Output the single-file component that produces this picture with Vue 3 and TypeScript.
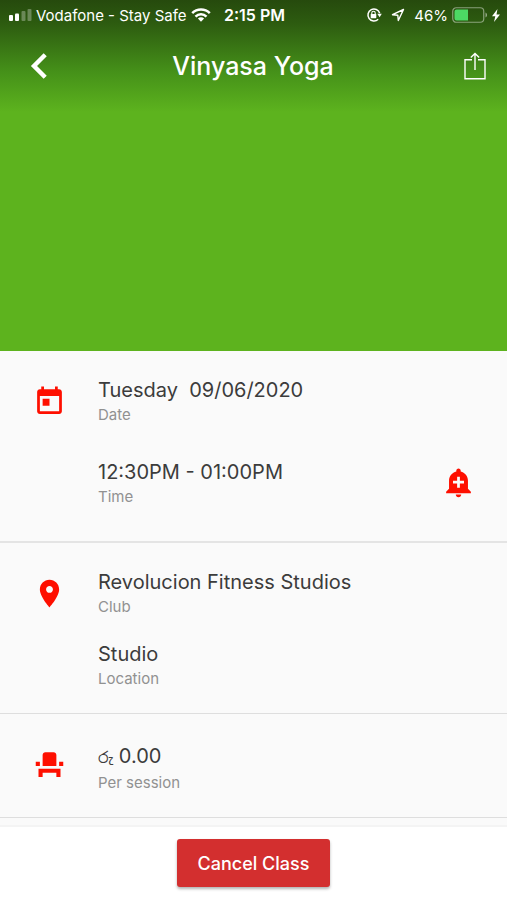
<script setup lang="ts">
import { ref } from 'vue'

interface Entry {
  currency?: string
  value: string
  label: string
  reminder?: boolean
}

interface Section {
  name: string
  icon: string
  entries: Entry[]
}

const title = ref('Vinyasa Yoga')

const sections: Section[] = [
  {
    name: 'schedule',
    icon: 'M19 3h-1V1h-2v2H8V1H6v2H5c-1.11 0-1.99.9-1.99 2L3 19c0 1.1.89 2 2 2h14c1.1 0 2-.9 2-2V5c0-1.1-.9-2-2-2zm0 16H5V8h14v11zM7 10h5v5H7z',
    entries: [
      { value: 'Tuesday  09/06/2020', label: 'Date' },
      { value: '12:30PM - 01:00PM', label: 'Time', reminder: true },
    ],
  },
  {
    name: 'place',
    icon: 'M12 2C8.13 2 5 5.13 5 9c0 5.25 7 13 7 13s7-7.75 7-13c0-3.87-3.13-7-7-7zm0 9.5c-1.38 0-2.5-1.12-2.5-2.5s1.12-2.5 2.5-2.5 2.5 1.12 2.5 2.5-1.12 2.5-2.5 2.5z',
    entries: [
      { value: 'Revolucion Fitness Studios', label: 'Club' },
      { value: 'Studio', label: 'Location' },
    ],
  },
  {
    name: 'price',
    icon: 'M4 18v3h3v-3h10v3h3v-6H4zm15-8h3v3h-3zM2 10h3v3H2zm15 3H7V5c0-1.1.9-2 2-2h6c1.1 0 2 .9 2 2v8z',
    entries: [{ currency: 'රු', value: ' 0.00', label: 'Per session' }],
  },
]
</script>

<template>
  <div class="screen">
    <header class="hero">
      <div class="status">
        <div class="status-left">
          <svg class="signal" width="23" height="12" viewBox="0 0 23 12" fill="#fff" aria-hidden="true">
            <rect x="0" y="6" width="4" height="6" rx="1" />
            <rect x="6" y="4.500" width="4" height="7.500" rx="1" />
            <rect x="12.500" y="2" width="4" height="10" rx="1" opacity=".3" />
            <rect x="18.500" y="0" width="4" height="12" rx="1" opacity=".3" />
          </svg>
          <span>Vodafone - Stay Safe</span>
          <svg width="20" height="14" viewBox="0 0 20 14" aria-hidden="true">
            <g fill="none" stroke="#fff" stroke-width="2.500">
              <path d="M1.200 5.200a12.500 12.500 0 0 1 17.600 0" />
              <path d="M4.500 8.600a7.800 7.800 0 0 1 11 0" />
            </g>
            <path d="M6.900 10.600a4.400 4.400 0 0 1 6.200 0L10 13.800z" fill="#fff" />
          </svg>
        </div>
        <time class="clock">2:15 PM</time>
        <div class="status-right">
          <svg class="lock" width="16" height="16" viewBox="0 0 16 16" aria-hidden="true">
            <path d="M12.200 12.200A6 6 0 1 1 13.700 6.200" fill="none" stroke="#fff" stroke-width="1.500" />
            <path d="M11.300 6.800h4.500l-2.200 3.400z" fill="#fff" />
            <rect x="4.700" y="7" width="5.600" height="4.200" rx=".6" fill="#fff" />
            <path d="M5.800 7.300V6a1.700 1.700 0 0 1 3.400 0v1.300" fill="none" stroke="#fff" stroke-width="1.100" />
          </svg>
          <svg class="arrow" width="14" height="14" viewBox="0 0 14 14" aria-hidden="true">
            <path d="M12.500 1.500L1.500 6.700l5.300.5.500 5.300z" fill="none" stroke="#fff" stroke-width="1.400" stroke-linejoin="round" />
          </svg>
          <span>46%</span>
          <svg class="battery" width="36" height="16" viewBox="0 0 36 16" aria-hidden="true">
            <rect x=".75" y=".75" width="31" height="14.500" rx="3.500" fill="none" stroke="#fff" stroke-opacity=".45" stroke-width="1.200" />
            <path d="M33.500 5.500c2 .8 2 4.200 0 5z" fill="#fff" fill-opacity=".5" />
            <path d="M4.500 2.500H16v11H4.500a2 2 0 0 1-2-2v-7a2 2 0 0 1 2-2z" fill="#4cd964" />
          </svg>
          <svg width="8" height="13" viewBox="0 0 8 13" aria-hidden="true">
            <path d="M5.500 0L0 7.300h3.300L2 13l6-7.500H4.500z" fill="#fff" />
          </svg>
        </div>
      </div>
      <nav class="bar">
        <button type="button" class="icon-button" aria-label="Back">
          <svg width="20" height="30" viewBox="0 0 20 30" aria-hidden="true">
            <path d="M16.200 3.800L5 15l11.200 11.200" fill="none" stroke="#fff" stroke-width="4.400" />
          </svg>
        </button>
        <h1>{{ title }}</h1>
        <button type="button" class="icon-button" aria-label="Share">
          <svg width="24" height="30" viewBox="0 0 24 30" fill="none" stroke="#fff" stroke-width="1.400" aria-hidden="true">
            <path d="M9 8.700H2v19h20v-19h-7M12 19V2.500M7.800 6.600L12 2.400l4.200 4.200" />
          </svg>
        </button>
      </nav>
    </header>

    <main>
      <section v-for="s in sections" :key="s.name" class="section" :class="s.name">
        <svg class="icon" viewBox="0 0 24 24" aria-hidden="true"><path :d="s.icon" /></svg>
        <dl>
          <div v-for="e in s.entries" :key="e.label" class="row">
            <div class="entry">
              <dd><span v-if="e.currency" class="currency">{{ e.currency }}</span>{{ e.value }}</dd>
              <dt>{{ e.label }}</dt>
            </div>
            <button v-if="e.reminder" type="button" class="icon-button" aria-label="Add reminder">
              <svg class="icon" viewBox="0 1 24 24" aria-hidden="true">
                <path d="M10.010 21.010c0 1.100.890 1.990 1.990 1.990s1.990-.890 1.990-1.990h-3.980zm8.870-4.190V11c0-3.250-2.250-5.970-5.290-6.690v-.720C13.590 2.710 12.880 2 12 2s-1.590.710-1.590 1.590v.720C7.370 5.030 5.120 7.750 5.120 11v5.820L3 18.940V20h18v-1.060l-2.120-2.120zM16 13.010h-3v3h-2v-3H8V11h3V8h2v3h3v2.010z" />
              </svg>
            </button>
          </div>
        </dl>
      </section>
    </main>

    <footer>
      <button type="button" class="cancel">Cancel Class</button>
    </footer>
  </div>
</template>

<style>
body {
  margin: 0;
  background: #fff;
}
</style>

<style scoped>
.screen {
  min-height: 100vh;
  display: flex;
  flex-direction: column;
  background: #fafafa;
  color: #3c3c3c;
  font-family: Inter, "Noto Sans Sinhala", "Noto Sans", sans-serif;
}

.hero {
  box-sizing: border-box;
  min-height: 351px;
  background: linear-gradient(#264a0d 0, #2d5c10 24px, #459119 72px, #5db31e 112px);
  color: #fff;
}

.status {
  display: grid;
  grid-template-columns: 1fr auto 1fr;
  align-items: center;
  height: 30px;
  padding: 0 7px 0 9px;
  font-size: 15px;
  white-space: nowrap;
}

.status-left,
.status-right {
  display: flex;
  align-items: center;
  gap: 4px;
  min-width: 0;
}

.status-right {
  justify-content: flex-end;
}

.status svg {
  flex: none;
}

.lock,
.arrow {
  margin-right: 5px;
}

.clock {
  font-size: 16px;
  font-weight: 600;
}

.bar {
  display: grid;
  grid-template-columns: 48px 1fr 48px;
  align-items: center;
  height: 72px;
  padding: 0 8px 0 15px;
}

h1 {
  margin: 0;
  padding-right: 8px;
  font-size: 25px;
  font-weight: 500;
  line-height: 32px;
  text-align: center;
}

.icon-button {
  display: grid;
  place-items: center;
  width: 48px;
  height: 48px;
  padding: 0;
  border: 0;
  background: none;
  cursor: pointer;
}

.section {
  display: flex;
  align-items: flex-start;
  gap: 32px;
  padding: 26px 25px 24px 33px;
  border-bottom: 1px solid #dedede;
}

.section.schedule {
  padding-bottom: 34px;
  border-bottom: 2px solid #e4e4e4;
}

.section.price {
  padding-top: 29px;
}

.icon {
  flex: none;
  width: 33px;
  height: 33px;
  fill: #fe0f00;
}

.section > .icon {
  margin-top: 8px;
}

.price > .icon {
  margin-top: 5px;
}

dl {
  flex: 1;
  display: flex;
  flex-direction: column;
  gap: 24px;
  margin: 0;
}

.schedule dl {
  gap: 34px;
}

.row {
  display: flex;
  align-items: center;
  justify-content: space-between;
}

.entry {
  display: flex;
  flex-direction: column;
  gap: 2px;
}

dd {
  margin: 0;
  font-size: 20px;
  line-height: 26px;
  white-space: pre-wrap;
}

.currency {
  font-size: 15px;
}

dt {
  color: #919191;
  font-size: 15px;
  line-height: 20px;
}

footer {
  flex: 1;
  display: flex;
  justify-content: center;
  align-items: flex-start;
  margin-top: 7px;
  padding: 12px 16px;
  border-top: 2px solid #f4f4f4;
  background: #fff;
}

.cancel {
  height: 48px;
  padding: 0 21px;
  border: 0;
  border-radius: 3px;
  background: #d32f2f;
  box-shadow: 0 2px 3px rgba(0, 0, 0, 0.3);
  color: #fff;
  font-family: inherit;
  font-size: 18px;
  font-weight: 500;
  cursor: pointer;
}
</style>
